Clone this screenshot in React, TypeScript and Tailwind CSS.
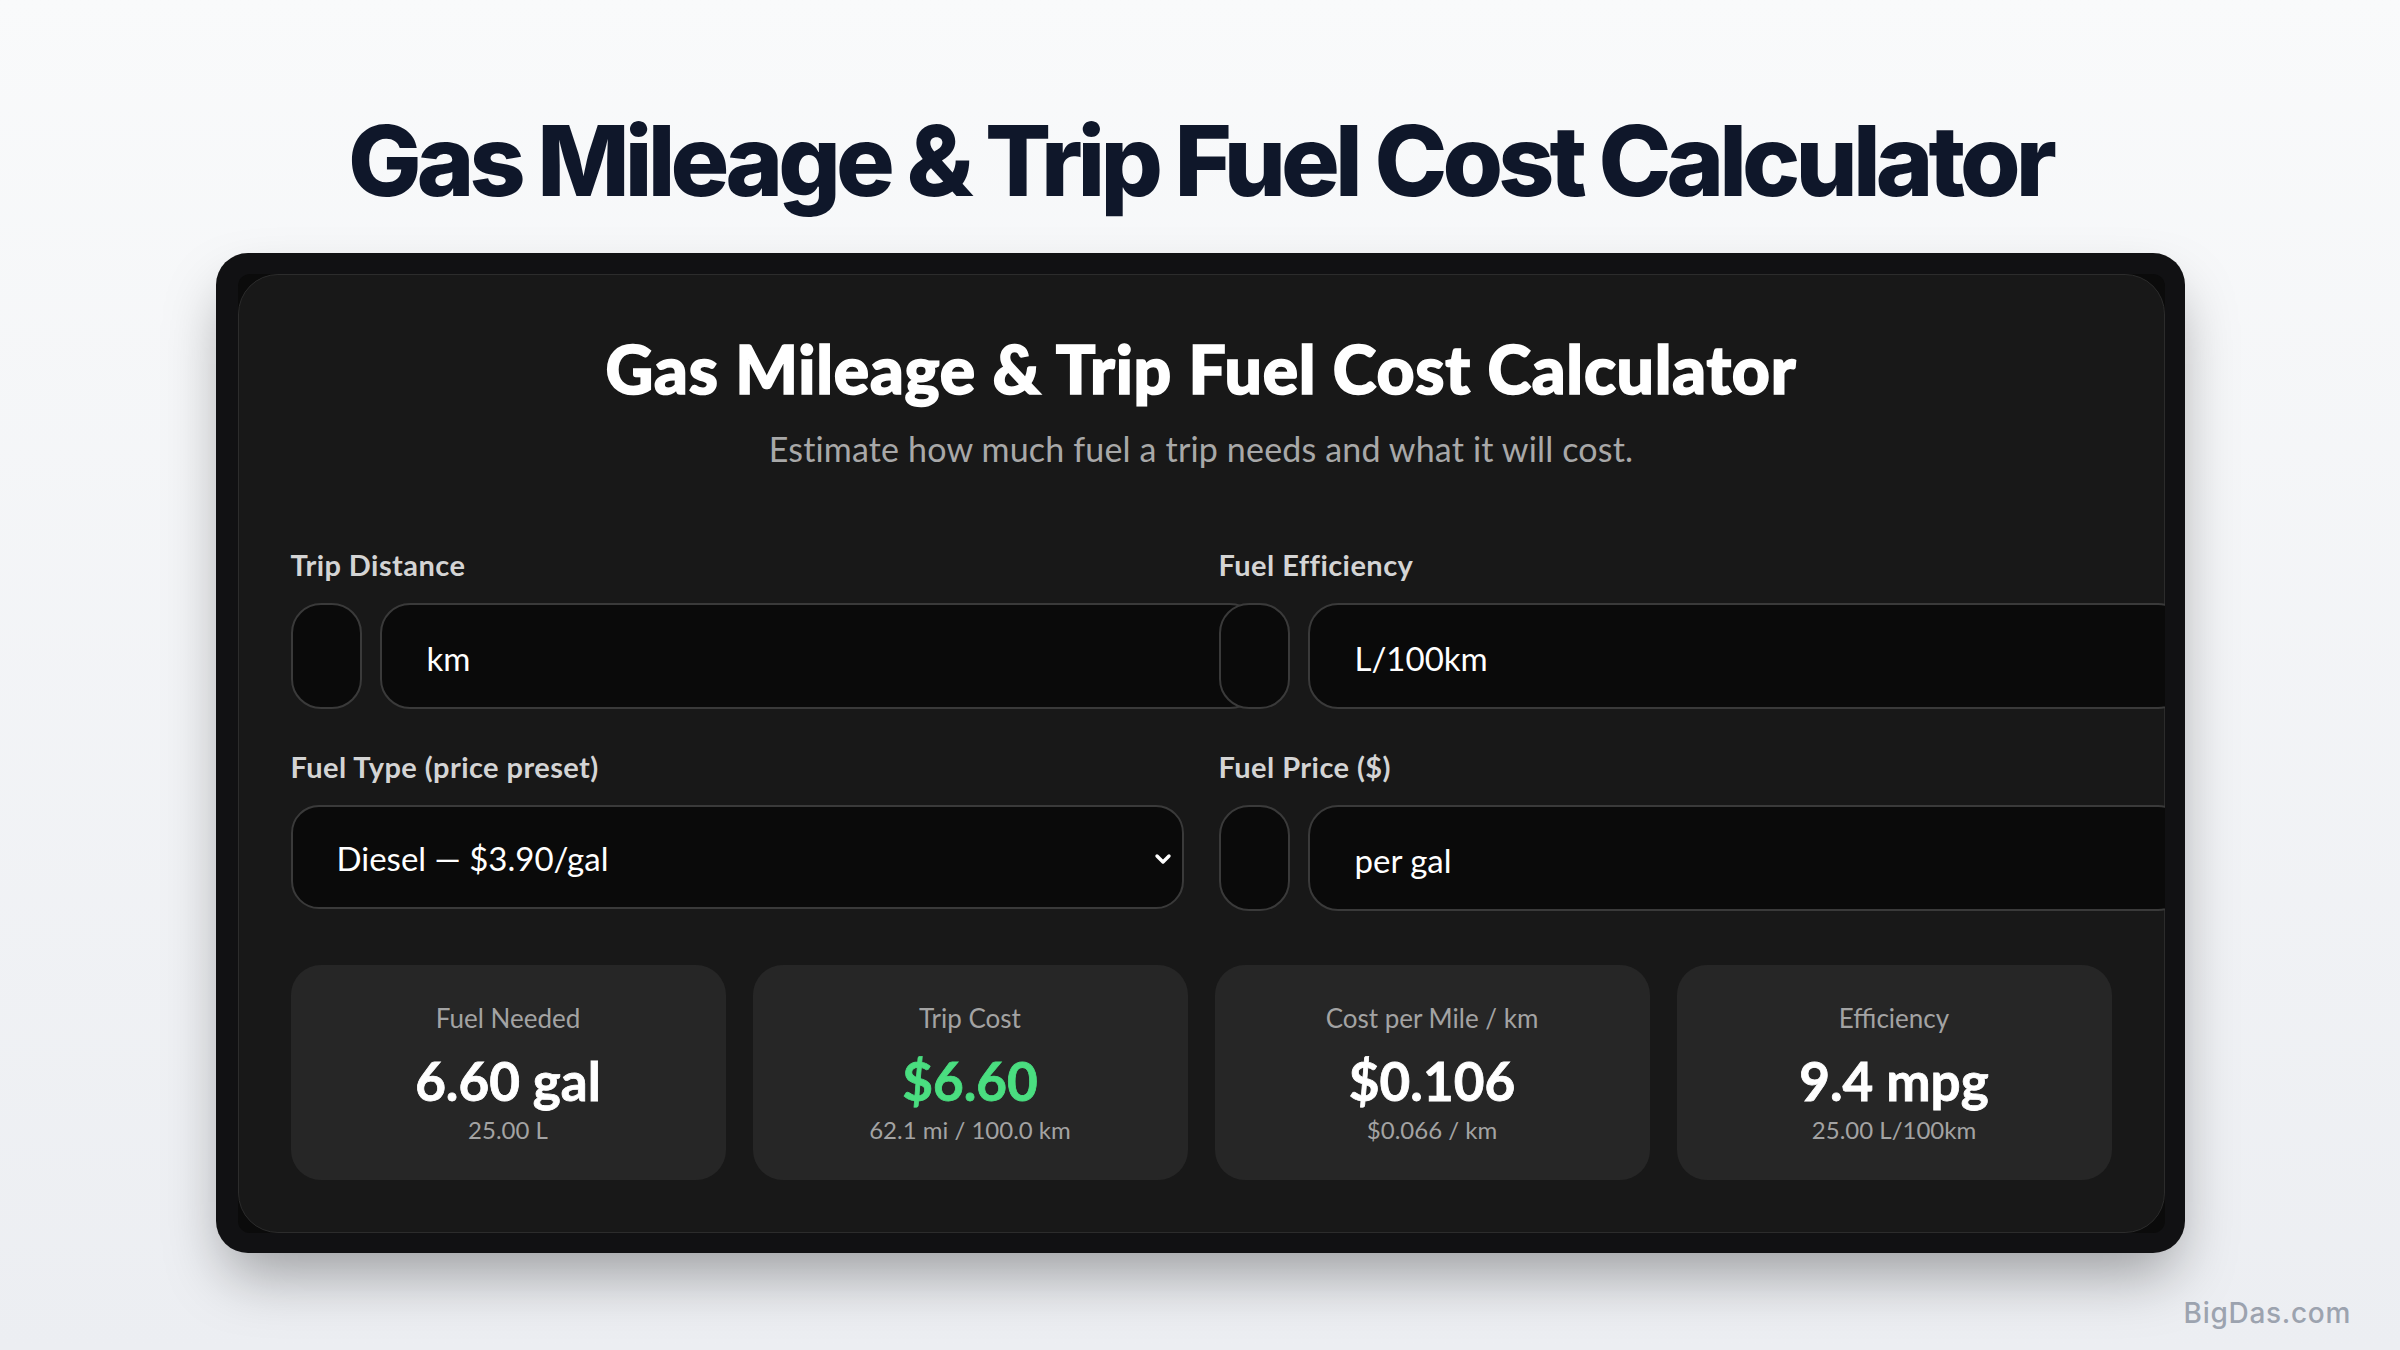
const card = "'Lato', 'Noto Sans', sans-serif";

function Field({ label, unit }: { label: string; unit: string }) {
  return (
    <div className="flex flex-col">
      <label className="text-[29px] leading-none font-bold tracking-[0.015em] text-[#d4d4d4]">{label}</label>
      <div className="mt-[24px] flex gap-[18px]">
        <div className="h-[106px] w-[71px] shrink-0 rounded-[30px] border-2 border-[#3a3a3a] bg-[#0a0a0a]" />
        <div className="flex h-[106px] w-[880px] shrink-0 items-center rounded-[30px] border-2 border-[#3a3a3a] bg-[#0a0a0a] pt-[6px] pl-[45px] text-[33px] text-white">
          {unit}
        </div>
      </div>
    </div>
  );
}

function Stat({ label, value, sub, green }: { label: string; value: string; sub: string; green?: boolean }) {
  return (
    <div className="flex h-[215px] flex-col items-center rounded-[30px] bg-[#262626] pt-[40px]">
      <div className="text-[26px] leading-none text-[#a3a3a3]">{label}</div>
      <div
        className={`mt-[23px] text-[53px] leading-none font-bold [-webkit-text-stroke:0.8px_currentColor] ${
          green ? 'text-[#4ade80]' : 'text-white'
        }`}
      >
        {value}
      </div>
      <div className="mt-[11px] text-[24px] leading-none text-[#a3a3a3]">{sub}</div>
    </div>
  );
}

export default function App() {
  return (
    <div className="relative flex min-h-screen w-full flex-col items-center bg-gradient-to-b from-[#f9fafb] to-[#eceef2]">
      <h1
        className="mt-[112px] text-[98px] leading-none font-extrabold tracking-[-0.05em] text-[#0f172a]"
        style={{ fontFamily: "'Inter', sans-serif" }}
      >
        Gas Mileage &amp; Trip Fuel Cost Calculator
      </h1>

      <div className="mt-[43px] w-[1969px] rounded-[32px] bg-[#111113] pt-[21px] pr-[20px] pb-[20px] pl-[22px] shadow-[0_30px_60px_-10px_rgba(0,0,0,0.35)]">
        <div className="h-[959px] overflow-hidden rounded-[12px] bg-[#0b0b0b]">
          <div
            className="h-full rounded-[40px] border border-[#2c2c2c] bg-[#181818] px-[52px] pt-[61px]"
            style={{ fontFamily: card }}
          >
            <h2 className="text-center text-[66px] leading-none font-black tracking-[0.012em] text-white [-webkit-text-stroke:1.6px_white]">
              Gas Mileage &amp; Trip Fuel Cost Calculator
            </h2>
            <p className="mt-[30px] text-center text-[34px] leading-none tracking-[0.005em] text-[#a8a8a8]">
              Estimate how much fuel a trip needs and what it will cost.
            </p>

            <div className="mt-[84px] grid grid-cols-2 gap-x-[35px] gap-y-[43px]">
              <Field label="Trip Distance" unit="km" />
              <Field label="Fuel Efficiency" unit="L/100km" />

              <div className="flex flex-col">
                <label className="text-[29px] leading-none font-bold tracking-[0.015em] text-[#d4d4d4]">
                  Fuel Type (price preset)
                </label>
                <div className="mt-[24px] flex h-[104px] items-center justify-between rounded-[28px] border-2 border-[#3a3a3a] bg-[#0a0a0a] pt-[4px] pr-[10px] pl-[44px] text-[33px] text-white">
                  <span>Diesel — $3.90/gal</span>
                  <svg width="18" height="14" viewBox="0 0 18 14" fill="none">
                    <path d="M3 4l6 6 6-6" stroke="white" strokeWidth="3.4" strokeLinecap="round" strokeLinejoin="round" />
                  </svg>
                </div>
              </div>
              <Field label="Fuel Price ($)" unit="per gal" />
            </div>

            <div className="mt-[54px] grid grid-cols-4 gap-[27px]">
              <Stat label="Fuel Needed" value="6.60 gal" sub="25.00 L" />
              <Stat label="Trip Cost" value="$6.60" sub="62.1 mi / 100.0 km" green />
              <Stat label="Cost per Mile / km" value="$0.106" sub="$0.066 / km" />
              <Stat label="Efficiency" value="9.4 mpg" sub="25.00 L/100km" />
            </div>
          </div>
        </div>
      </div>

      <div
        className="absolute right-[49px] bottom-[23px] text-[28px] leading-none font-medium tracking-[0.025em] text-[#9ca3af]"
        style={{ fontFamily: "'Inter', sans-serif" }}
      >
        BigDas.com
      </div>
    </div>
  );
}
